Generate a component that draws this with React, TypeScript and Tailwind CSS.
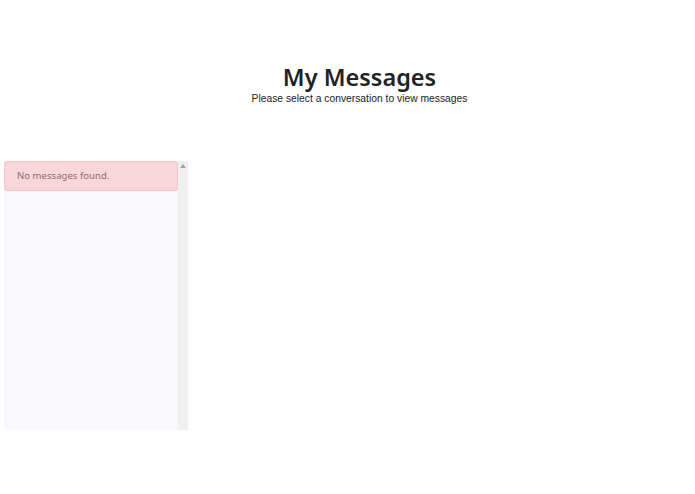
export default function App() {
  return (
    <div className="w-[695px] h-[494px] bg-white relative overflow-hidden" style={{ fontFamily: '"Liberation Sans", Arial, sans-serif' }}>
      <div className="pl-[24px] pt-[62px] flex flex-col items-center">
        <h1 className="text-[23.5px] leading-[30px] font-semibold text-[#222]" style={{ fontFamily: '"Noto Sans", sans-serif' }}>
          My Messages
        </h1>
        <p className="text-[10.3px] leading-[12px] text-[#222] mt-[1px]">
          Please select a conversation to view messages
        </p>
      </div>
      <div className="mt-[56px] ml-[4px] w-[184px] h-[269px] flex">
        <div className="flex-1 bg-[#f9f9fd]">
          <div
            className="h-[30px] flex items-center pl-[12px] bg-[#f8d7da] border border-[#f5c2c7] rounded-[3px] text-[9.6px] text-[#946b70]"
            style={{ fontFamily: '"Noto Sans", sans-serif' }}
          >
            No messages found.
          </div>
        </div>
        <div className="w-[10px] bg-[#f0f0f0] flex justify-center pt-[3px]">
          <svg width="6" height="4" viewBox="0 0 6 4">
            <path d="M0 4 L3 0 L6 4 Z" fill="#a3a3a3" />
          </svg>
        </div>
      </div>
    </div>
  );
}
